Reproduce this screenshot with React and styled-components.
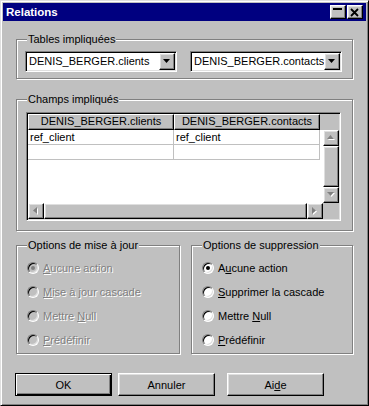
import React from 'react';
import styled, { createGlobalStyle, css } from 'styled-components';

const Global = createGlobalStyle`
  html, body { margin: 0; padding: 0; background: #c0c0c0; }
  body { font-family: "Liberation Sans", Arial, sans-serif; font-size: 11px; color: #000; }
  * { box-sizing: border-box; }
`;

const raised = css`
  border: 1px solid;
  border-color: #fff #000 #000 #fff;
  box-shadow: inset -1px -1px #808080, inset 1px 1px #dfdfdf;
  background: #c0c0c0;
`;

const sunken = css`
  border: 1px solid;
  border-color: #808080 #fff #fff #808080;
  box-shadow: inset 1px 1px #000, inset -1px -1px #dfdfdf;
`;

const Window = styled.div`
  width: 369px;
  height: 406px;
  background: #c0c0c0;
  border: 1px solid;
  border-color: #dfdfdf #000 #000 #dfdfdf;
  box-shadow: inset 1px 1px #fff, inset -1px -1px #808080;
  padding: 2px;
  display: flex;
  flex-direction: column;
`;

const TitleBar = styled.div`
  height: 18px;
  flex: none;
  background: #000080;
  color: #fff;
  display: flex;
  align-items: center;
  padding: 0 3px 0 3px;
`;

const Title = styled.span`
  flex: 1;
  font-weight: bold;
  font-size: 11.5px;
  line-height: 18px;
`;

const CaptionButton = styled.div`
  ${raised};
  width: 16px;
  height: 14px;
  margin-left: ${p => p.$gap || 0}px;
  display: flex;
  align-items: center;
  justify-content: center;
`;

const Body = styled.div`
  flex: 1;
  display: flex;
  flex-direction: column;
  padding: 18px 13px 0 13px;
`;

const Group = styled.div`
  position: relative;
  flex: none;
  border: 1px solid #808080;
  box-shadow: inset 1px 1px #fff, 1px 1px #fff;
  margin-top: ${p => p.$mt || 0}px;
  padding: ${p => p.$pad};
`;

const OptionGroup = styled(Group)`
  width: ${p => (p.$w ? `${p.$w}px` : 'auto')};
  flex: ${p => (p.$w ? 'none' : '1')};
  height: 109px;
`;

const GroupLabel = styled.span`
  position: absolute;
  top: -7px;
  left: 10px;
  padding: 0 1px;
  background: #c0c0c0;
  line-height: 13px;
  white-space: nowrap;
`;

const ComboRow = styled.div`
  display: flex;
  gap: 13px;
`;

const Combo = styled.div`
  ${sunken};
  width: 152px;
  height: 21px;
  background: #fff;
  display: flex;
  align-items: center;
  padding: 1px;
`;

const ComboText = styled.span`
  flex: 1;
  padding-left: 2px;
  white-space: nowrap;
  overflow: hidden;
  line-height: 17px;
`;

const DropButton = styled.div`
  ${raised};
  width: 16px;
  height: 17px;
  flex: none;
  display: flex;
  align-items: center;
  justify-content: center;
`;

const ListView = styled.div`
  ${sunken};
  width: 315px;
  height: 109px;
  background: #fff;
  padding: 1px;
  display: grid;
  grid-template-columns: 1fr 16px;
  grid-template-rows: 16px 1fr 16px;
  grid-template-areas:
    'head head'
    'data vs'
    'hs corner';
`;

const Header = styled.div`
  grid-area: head;
  display: flex;
  background: #c0c0c0;
`;

const HeaderCell = styled.div`
  width: 146px;
  height: 16px;
  border: 1px solid;
  border-color: #fff #000 #000 #fff;
  box-shadow: inset -1px -1px #808080;
  background: #c0c0c0;
  text-align: center;
  line-height: 13px;
  white-space: nowrap;
  overflow: hidden;
`;

const Data = styled.div`
  grid-area: data;
  background: #fff;
`;

const DataRow = styled.div`
  display: flex;
`;

const DataCell = styled.div`
  width: 146px;
  height: 15px;
  border-right: 1px solid #c0c0c0;
  border-bottom: 1px solid #c0c0c0;
  padding-left: 2px;
  line-height: 14px;
  white-space: nowrap;
`;

const VScroll = styled.div`
  grid-area: vs;
  display: flex;
  flex-direction: column;
  background: #c0c0c0;
`;

const HScroll = styled.div`
  grid-area: hs;
  display: flex;
  background: #c0c0c0;
`;

const Corner = styled.div`
  grid-area: corner;
  background: #c0c0c0;
`;

const ScrollButton = styled.div`
  ${raised};
  width: 16px;
  height: 16px;
  flex: none;
  display: flex;
  align-items: center;
  justify-content: center;
`;

const Thumb = styled.div`
  ${raised};
  flex: 1;
`;

const OptionsRow = styled.div`
  display: flex;
  gap: 11px;
  margin-top: 14px;
`;

const RadioRow = styled.div`
  height: 24px;
  display: flex;
  align-items: center;
  gap: 4px;
  color: ${p => (p.$disabled ? '#808080' : '#000')};
  text-shadow: ${p => (p.$disabled ? '1px 1px 0 #fff' : 'none')};
`;

const RadioCircle = styled.span`
  width: 12px;
  height: 12px;
  flex: none;
  border-radius: 50%;
  border: 1px solid;
  border-color: #808080 #fff #fff #808080;
  box-shadow: inset 1px 1px #000, inset -1px -1px #dfdfdf;
  background: ${p => (p.$disabled ? '#c0c0c0' : '#fff')};
  display: flex;
  align-items: center;
  justify-content: center;
  &::after {
    content: '';
    width: 4px;
    height: 4px;
    border-radius: 50%;
    background: ${p => (p.$disabled ? '#808080' : '#000')};
    display: ${p => (p.$checked ? 'block' : 'none')};
  }
`;

const RadioLabel = styled.span`
  line-height: 13px;
  white-space: nowrap;
`;

const ButtonRow = styled.div`
  display: flex;
  margin-top: 19px;
  margin-left: -1px;
`;

const Button = styled.div`
  width: 97px;
  height: 23px;
  margin-left: ${p => p.$ml || 0}px;
  display: flex;
  align-items: center;
  justify-content: center;
  background: #c0c0c0;
  border: 1px solid;
  ${p =>
    p.$default
      ? css`
          border-color: #000;
          box-shadow: inset 1px 1px #fff, inset -1px -1px #000, inset -2px -2px #808080;
        `
      : css`
          border-color: #fff #000 #000 #fff;
          box-shadow: inset -1px -1px #808080, inset 1px 1px #dfdfdf;
        `}
`;

const Arrow = ({ dir, disabled }) => {
  const shapes = {
    down: '0,0 7,0 3.5,4',
    up: '0,4 7,4 3.5,0',
    left: '4,0 4,7 0,3.5',
    right: '0,0 0,7 4,3.5',
  };
  const vertical = dir === 'up' || dir === 'down';
  const w = vertical ? 8 : 5;
  const h = vertical ? 5 : 8;
  return (
    <svg width={w + 1} height={h + 1} viewBox={`0 0 ${w + 1} ${h + 1}`}>
      {disabled && <polygon points={shapes[dir]} fill="#fff" transform="translate(1,1)" />}
      <polygon points={shapes[dir]} fill={disabled ? '#808080' : '#000'} />
    </svg>
  );
};

const Radio = ({ label, checked, disabled }) => (
  <RadioRow $disabled={disabled}>
    <RadioCircle $checked={checked} $disabled={disabled} />
    <RadioLabel>{label}</RadioLabel>
  </RadioRow>
);

export default function App() {
  return (
    <>
      <Global />
      <Window>
        <TitleBar>
          <Title>Relations</Title>
          <CaptionButton>
            <svg width="12" height="10" viewBox="0 0 12 10">
              <rect x="1" y="1" width="9" height="2" fill="#000" />
            </svg>
          </CaptionButton>
          <CaptionButton $gap={1}>
            <svg width="10" height="9" viewBox="0 0 10 9">
              <path d="M1 1 L8 8 M8 1 L1 8" stroke="#000" strokeWidth="1.8" />
            </svg>
          </CaptionButton>
        </TitleBar>
        <Body>
          <Group $pad="11px 10px 6px 8px">
            <GroupLabel>Tables impliquées</GroupLabel>
            <ComboRow>
              <Combo>
                <ComboText>DENIS_BERGER.clients</ComboText>
                <DropButton><Arrow dir="down" /></DropButton>
              </Combo>
              <Combo>
                <ComboText>DENIS_BERGER.contacts</ComboText>
                <DropButton><Arrow dir="down" /></DropButton>
              </Combo>
            </ComboRow>
          </Group>

          <Group $mt={20} $pad="12px 11px 9px 9px">
            <GroupLabel>Champs impliqués</GroupLabel>
            <ListView>
              <Header>
                <HeaderCell>DENIS_BERGER.clients</HeaderCell>
                <HeaderCell>DENIS_BERGER.contacts</HeaderCell>
              </Header>
              <Data>
                <DataRow>
                  <DataCell>ref_client</DataCell>
                  <DataCell>ref_client</DataCell>
                </DataRow>
                <DataRow>
                  <DataCell />
                  <DataCell />
                </DataRow>
              </Data>
              <VScroll>
                <ScrollButton><Arrow dir="up" disabled /></ScrollButton>
                <Thumb />
                <ScrollButton><Arrow dir="down" disabled /></ScrollButton>
              </VScroll>
              <HScroll>
                <ScrollButton><Arrow dir="left" disabled /></ScrollButton>
                <Thumb />
                <ScrollButton><Arrow dir="right" disabled /></ScrollButton>
              </HScroll>
              <Corner />
            </ListView>
          </Group>

          <OptionsRow>
            <OptionGroup $w={164} $pad="10px 0 0 10px">
              <GroupLabel>Options de mise à jour</GroupLabel>
              <Radio disabled checked label={<><u>A</u>ucune action</>} />
              <Radio disabled label={<><u>M</u>ise à jour cascade</>} />
              <Radio disabled label={<>Mettre <u>N</u>ull</>} />
              <Radio disabled label={<><u>P</u>rédéfinir</>} />
            </OptionGroup>
            <OptionGroup $pad="10px 0 0 10px">
              <GroupLabel>Options de suppression</GroupLabel>
              <Radio checked label={<>A<u>u</u>cune action</>} />
              <Radio label={<><u>S</u>upprimer la cascade</>} />
              <Radio label={<>Mettre <u>N</u>ull</>} />
              <Radio label={<><u>P</u>rédéfinir</>} />
            </OptionGroup>
          </OptionsRow>

          <ButtonRow>
            <Button $default>OK</Button>
            <Button $ml={6}>Annuler</Button>
            <Button $ml={12}>Ai<u>d</u>e</Button>
          </ButtonRow>
        </Body>
      </Window>
    </>
  );
}
